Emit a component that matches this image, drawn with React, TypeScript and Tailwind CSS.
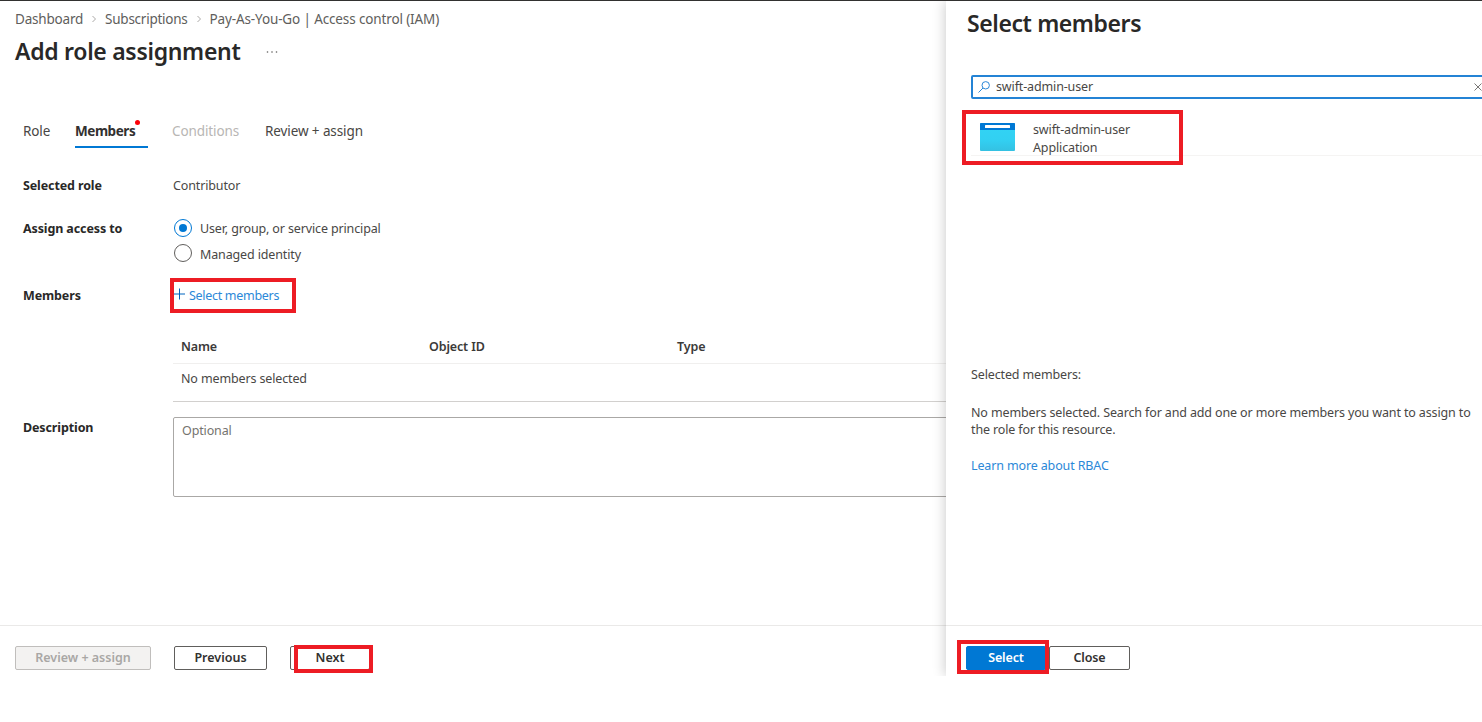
import React from 'react';

const tabs = [
  { label: 'Role', className: 'w-[52px] text-[#484644]' },
  { label: 'Members', className: 'w-[73px] mr-6 font-bold text-[#323130] tracking-[-0.45px] border-b-2 border-[#0078d4]', dot: true },
  { label: 'Conditions', className: 'w-[93px] text-[#b8b6b4]' },
  { label: 'Review + assign', className: 'text-[#484644]' },
];

function Highlight({ className }: { className: string }) {
  return <div className={`absolute border-4 border-[#ed1c24] pointer-events-none ${className}`} />;
}

function Chevron() {
  return (
    <svg className="w-1.5 h-2 mx-2" viewBox="0 0 6 8" fill="none" stroke="#a19f9d" strokeWidth="0.9">
      <path d="M1.5 1 L4.5 4 L1.5 7" />
    </svg>
  );
}

function Label({ children }: { children: React.ReactNode }) {
  return <div className="w-[150px] shrink-0 font-bold text-[#292827] tracking-[-0.12px]">{children}</div>;
}

export default function AddRoleAssignment() {
  return (
    <div className="w-[1482px] h-[722px] overflow-hidden bg-white font-['Noto_Sans','Open_Sans',sans-serif] text-[12.5px] leading-[18px] tracking-[-0.135px] text-[#494745]">
      <div className="flex h-[676px] border-t border-[#323130]">

        {/* Main blade */}
        <div className="w-[946px] shrink-0 flex flex-col overflow-hidden">
          <nav className="flex items-center h-5 mt-2 ml-[15px] text-[13.5px] text-[#605e5c] whitespace-nowrap">
            <span className="tracking-[-0.2px]">Dashboard</span>
            <Chevron />
            <span className="tracking-[-0.25px]">Subscriptions</span>
            <Chevron />
            <span className="tracking-[-0.13px]">Pay-As-You-Go | Access control (IAM)</span>
          </nav>
          <div className="flex items-center h-[34px] mt-[5px] ml-[15px]">
            <h1 className="w-[251px] text-[23px] font-semibold text-[#292827] tracking-[-0.3px] whitespace-nowrap">Add role assignment</h1>
            <svg className="w-3 h-1 mt-0.5" viewBox="0 0 12 4" fill="#605e5c">
              <circle cx="1.5" cy="2" r="0.8" />
              <circle cx="6" cy="2" r="0.8" />
              <circle cx="10.5" cy="2" r="0.8" />
            </svg>
          </div>

          {/* Tabs */}
          <div className="flex h-[31px] mt-[49px] ml-[23px] text-[13.5px] tracking-[-0.1px]">
            {tabs.map((tab) => (
              <div key={tab.label} className={`relative h-[31px] pt-1 leading-5 whitespace-nowrap ${tab.className}`}>
                {tab.label}
                {tab.dot && <span className="absolute left-[60px] top-[3px] w-[5px] h-[5px] rounded-full bg-[#fb0007]" />}
              </div>
            ))}
          </div>

          {/* Form */}
          <div className="flex h-[18px] mt-[29px] ml-[23px]">
            <Label>Selected role</Label>
            <span>Contributor</span>
          </div>
          <div className="flex h-[50px] mt-5 ml-[23px]">
            <Label><div className="pt-[5px]">Assign access to</div></Label>
            <div className="pl-px">
              <div className="flex items-center gap-2 h-[26px]">
                <span className="w-[18px] h-[18px] mt-[-1px] rounded-full border border-[#0078d4] flex items-center justify-center">
                  <span className="w-2 h-2 rounded-full bg-[#0078d4]" />
                </span>
                <span className="pt-0.5">User, group, or service principal</span>
              </div>
              <div className="flex items-center gap-2 h-[26px]">
                <span className="w-[18px] h-[18px] mt-[-3px] rounded-full border border-[#605e5c]" />
                <span className="pt-0.5">Managed identity</span>
              </div>
            </div>
          </div>
          <div className="flex items-center h-[34px] mt-[13px] ml-[23px]">
            <Label><div className="pt-0.5">Members</div></Label>
            <div className="relative flex items-center h-[34px] text-[#2b88d8]">
              <svg className="w-3 h-3 mr-1 mt-[-3px]" viewBox="0 0 12 12" fill="none" stroke="#0064bf" strokeWidth="1">
                <path d="M6.5 0.5 V11.5 M1 6 H12" />
              </svg>
              <span className="pt-0.5 tracking-[-0.3px]">Select members</span>
              <Highlight className="left-[-3px] top-0 w-[126px] h-[35px]" />
            </div>
          </div>

          <div className="ml-[173px] mt-[17px] w-[800px]">
            <div className="grid grid-cols-[248px_248px_1fr] h-[35px] pt-[9px] pl-2 font-semibold text-[#3b3a39] border-b border-[#f0efee]">
              <span>Name</span>
              <span>Object ID</span>
              <span>Type</span>
            </div>
            <div className="h-[38px] pt-1.5 pl-2 border-b border-[#d2d0ce]">No members selected</div>
          </div>
          <div className="flex mt-[15px] ml-[23px]">
            <Label><div className="pt-0.5">Description</div></Label>
            <div className="w-[800px] h-[80px] shrink-0 pl-2 pt-1 border border-[#aaa8a6] rounded-[2px] text-[#75736f]">Optional</div>
          </div>

          {/* Footer */}
          <div className="flex mt-auto h-[51px] pt-5 pl-[15px] border-t border-[#eae9e8] font-semibold text-center leading-[22px] tracking-normal">
            <div className="w-[136px] h-6 border border-[#c0bebc] rounded-[2px] bg-[#f3f2f1] text-[#a9a7a5]">Review + assign</div>
            <div className="w-[93px] h-6 ml-[23px] border border-[#605e5c] rounded-[2px] text-[#323130]">Previous</div>
            <div className="relative w-[80px] h-6 ml-[23px] border border-[#605e5c] rounded-[2px] text-[#323130]">
              Next
              <Highlight className="left-[3px] top-[-2px] w-[79px] h-7" />
            </div>
          </div>
        </div>

        {/* Select members panel */}
        <div className="w-[536px] shrink-0 flex flex-col bg-white shadow-[-1px_0_12px_rgba(0,0,0,0.2)] [clip-path:inset(0_0_0_-20px)]">
          <h2 className="mt-[6px] ml-[21px] text-[23px] leading-8 font-semibold text-[#292827] tracking-[-0.4px]">Select members</h2>
          <div className="flex items-center h-6 mt-9 ml-[25px] w-[530px] border-2 border-[#2483d5] rounded-[2px]">
            <svg className="w-3 h-3 ml-[5px] mr-[6px] shrink-0" viewBox="0 0 12 12" fill="none" stroke="#2b88d8" strokeWidth="1">
              <circle cx="7.7" cy="4.3" r="3.7" />
              <path d="M5 7 L0.5 11.5" />
            </svg>
            <span className="w-[478px] whitespace-nowrap">swift-admin-user</span>
            <svg className="w-2 h-2 shrink-0" viewBox="0 0 8 8" fill="none" stroke="#797775" strokeWidth="1">
              <path d="M0.5 0.5 L7.5 7.5 M7.5 0.5 L0.5 7.5" />
            </svg>
          </div>
          <div className="relative flex h-[57px] ml-[25px] border-b border-[#f5f4f3]">
            <svg className="w-[35px] h-7 mt-6 ml-[9px]" viewBox="0 0 35 28">
              <defs>
                <linearGradient id="app" x1="0" y1="0" x2="0" y2="1">
                  <stop offset="0" stopColor="#32d4f5" />
                  <stop offset="0.6" stopColor="#32d0f2" />
                  <stop offset="1" stopColor="#34c1e2" />
                </linearGradient>
              </defs>
              <rect width="35" height="28" rx="1" fill="url(#app)" />
              <path d="M1 0 H34 Q35 0 35 1 V7 H0 V1 Q0 0 1 0 Z" fill="#0078d4" />
              <rect x="5" y="2" width="25" height="3" rx="0.5" fill="#fff" />
            </svg>
            <div className="ml-[18px] pt-[22px] leading-[17.5px]">
              <div>swift-admin-user</div>
              <div>Application</div>
            </div>
            <Highlight className="left-[-9px] top-[11px] w-[221px] h-[55px]" />
          </div>

          <div className="mt-[210px] ml-[25px] leading-[17.5px] whitespace-nowrap">
            <p>Selected members:</p>
            <p className="mt-5">
              No members selected. Search for and add one or more members you want to assign to<br />
              the role for this resource.
            </p>
            <p className="mt-[18px] text-[#2b88d8]">Learn more about RBAC</p>
          </div>

          <div className="flex mt-auto h-[51px] pt-5 pl-5 border-t border-[#eae9e8] font-semibold text-center leading-[22px]">
            <div className="relative w-[80px] h-6 border border-[#0078d4] bg-[#0078d4] rounded-[2px] text-white">
              Select
              <Highlight className="left-[-10px] top-[-7px] w-[92px] h-[34px]" />
            </div>
            <div className="w-[81px] h-6 ml-[3px] border border-[#605e5c] rounded-[2px] text-[#323130]">Close</div>
          </div>
        </div>
      </div>
    </div>
  );
}
